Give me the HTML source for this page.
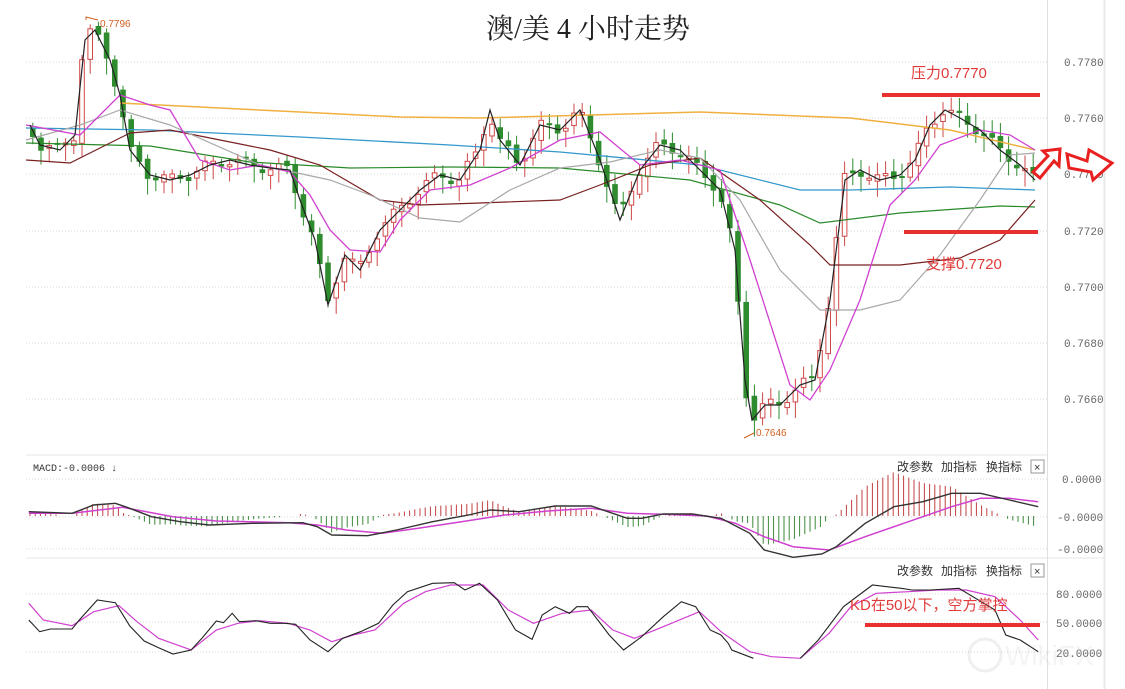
<!DOCTYPE html>
<html><head><meta charset="utf-8"><style>
html,body{margin:0;padding:0;background:#fff;width:1125px;height:689px;overflow:hidden}
svg{display:block}
.ax{font-family:"Liberation Mono",monospace;font-size:11px;fill:#666}
.hd{font-family:"Liberation Sans","Noto Sans CJK SC",sans-serif;font-size:12px;fill:#333}
.red{font-family:"Liberation Sans","Noto Sans CJK SC",sans-serif;font-size:15px;fill:#e03a3a}
</style></head><body>
<svg id="s" width="1125" height="689" xmlns="http://www.w3.org/2000/svg">
<rect width="1125" height="689" fill="#fff"/>
<g stroke="#d8d8d8" stroke-dasharray="1,2" stroke-width="1">
<line x1="26" y1="62" x2="1047" y2="62"/><line x1="26" y1="118" x2="1047" y2="118"/>
<line x1="26" y1="174" x2="1047" y2="174"/><line x1="26" y1="231" x2="1047" y2="231"/>
<line x1="26" y1="287" x2="1047" y2="287"/><line x1="26" y1="343" x2="1047" y2="343"/>
<line x1="26" y1="399" x2="1047" y2="399"/>
<line x1="26" y1="479" x2="1047" y2="479"/><line x1="26" y1="517" x2="1047" y2="517"/><line x1="26" y1="549" x2="1047" y2="549"/>
<line x1="26" y1="594" x2="1047" y2="594"/><line x1="26" y1="622" x2="1047" y2="622"/><line x1="26" y1="652" x2="1047" y2="652"/>
</g>
<line x1="26" y1="455" x2="1047" y2="455" stroke="#e4e4e4"/>
<line x1="26" y1="558" x2="1105" y2="558" stroke="#e4e4e4"/>
<line x1="1047.5" y1="0" x2="1047.5" y2="689" stroke="#e0e0e0"/>
<line x1="1104.5" y1="0" x2="1104.5" y2="689" stroke="#e8e8e8" stroke-width="2"/>
<g class="ax">
<text x="1064" y="66">0.7780</text><text x="1064" y="122">0.7760</text><text x="1064" y="178">0.7740</text>
<text x="1064" y="235">0.7720</text><text x="1064" y="291">0.7700</text><text x="1064" y="347">0.7680</text>
<text x="1064" y="403">0.7660</text>
<text x="1062" y="483">0.0000</text><text x="1057" y="521">-0.0000</text><text x="1057" y="553">-0.0000</text>
<text x="1056" y="598">80.0000</text><text x="1056" y="627">50.0000</text><text x="1056" y="657">20.0000</text>
</g>
<text x="588" y="38" text-anchor="middle" font-family="'Liberation Serif','Noto Serif CJK SC',serif" font-size="28" fill="#222">澳/美 4 小时走势</text>
<g id="cand"></g>
<g id="lines" fill="none"></g>
<text x="100" y="27" font-family="Liberation Sans,sans-serif" font-size="10" fill="#d06020">0.7796</text>
<path d="M86 20 L86 17 L98 20" stroke="#d06020" fill="none"/>
<text x="756" y="436" font-family="Liberation Sans,sans-serif" font-size="10" fill="#d06020">0.7646</text>
<path d="M744 438 L754 433" stroke="#d06020" fill="none"/>
<text x="911" y="78" class="red">压力0.7770</text>
<rect x="882" y="93" width="158" height="4" fill="#e83030"/>
<text x="926" y="269" class="red">支撑0.7720</text>
<rect x="904" y="230" width="134" height="4" fill="#e83030"/>
<text x="850" y="610" class="red">KD在50以下，空方掌控</text>
<rect x="865" y="623" width="175" height="4" fill="#e83030"/>
<polygon points="1033,172 1048,156 1043,151 1060,149 1059,166 1054,161 1040,178" fill="#fff" stroke="#e82020" stroke-width="3"/>
<polygon points="1067,154 1087,161 1089,150 1112,163 1093,180 1091,172 1069,168" fill="#fff" stroke="#e82020" stroke-width="3"/>
<text x="33" y="471" font-family="Liberation Mono,monospace" font-size="10" fill="#333">MACD:-0.0006 ↓</text>
<g class="hd">
<text x="897" y="471">改参数</text><text x="941" y="471">加指标</text><text x="986" y="471">换指标</text>
<rect x="1031" y="460" width="13" height="13" fill="#fff" stroke="#999"/><text x="1034" y="471" font-size="11">×</text>
<text x="897" y="575">改参数</text><text x="941" y="575">加指标</text><text x="986" y="575">换指标</text>
<rect x="1031" y="564" width="13" height="13" fill="#fff" stroke="#999"/><text x="1034" y="575" font-size="11">×</text>
</g>
<g opacity="0.15"><circle cx="985" cy="655" r="16" fill="none" stroke="#999" stroke-width="3"/>
<text x="1005" y="665" font-family="Liberation Sans,sans-serif" font-size="28" fill="#bbb">WikiFX</text></g>
</svg>
<script>
(function(){
var NS="http://www.w3.org/2000/svg",L=document.getElementById('lines'),C=document.getElementById('cand');
function pl(pts,col,w){var p=document.createElementNS(NS,'polyline');p.setAttribute('points',pts.map(function(a){return a[0].toFixed(1)+','+a[1].toFixed(1)}).join(' '));p.setAttribute('stroke',col);p.setAttribute('stroke-width',w||1);p.setAttribute('fill','none');L.appendChild(p);}
function el(t,a){var e=document.createElementNS(NS,t);for(var k in a)e.setAttribute(k,a[k]);C.appendChild(e);return e;}
var key=[[30,125],[40,145],[60,150],[75,135],[85,40],[95,30],[110,60],[120,95],[130,150],[150,175],[170,180],[190,175],[210,165],[230,160],[250,165],[270,168],[290,170],[300,200],[315,240],[328,305],[345,255],[360,270],[380,230],[400,210],[420,190],[440,175],[460,180],[480,150],[490,110],[500,140],[520,165],[540,125],[560,130],[580,110],[600,160],[620,220],[640,170],[660,145],[680,150],[700,170],[720,190],[735,250],[745,380],[752,420],[765,405],[780,405],[800,385],[815,380],[830,300],[845,180],[860,170],[880,180],[900,175],[915,160],[930,125],[945,110],[960,118],[980,130],[1000,150],[1020,165],[1035,180]];
function it(A,x){if(x<=A[0][0])return A[0][1];for(var i=1;i<A.length;i++)if(x<=A[i][0]){var a=A[i-1],b=A[i];return a[1]+(b[1]-a[1])*(x-a[0])/(b[0]-a[0]);}return A[A.length-1][1];}
var prev=it(key,30);
for(var x=30;x<=1036;x+=8.2){
 var c=it(key,x+4)+Math.sin(x*1.7)*6,o=prev+Math.sin(x*0.9)*3;
 var up=c<o,tp=Math.min(o,c),h=Math.max(Math.abs(o-c),2);
 var hi=tp-4-Math.abs(Math.sin(x*2.3))*10,lo=tp+h+4+Math.abs(Math.cos(x*1.3))*12;
 var col=up?'#d04848':'#2e8b2e';
 el('line',{x1:x+2.8,x2:x+2.8,y1:hi,y2:lo,stroke:col,'stroke-width':1});
 if(up)el('rect',{x:x+0.5,y:tp,width:4.6,height:h,fill:'#fff',stroke:col,'stroke-width':1});
 else el('rect',{x:x,y:tp,width:5.6,height:h,fill:col});
 prev=c;
}
pl([[120,103],[300,112],[400,117],[480,118],[700,112],[850,118],[950,130],[1035,150]],'#f0b040',1.5);
pl([[26,128],[150,130],[300,137],[450,145],[560,152],[700,165],[800,190],[850,190],[950,187],[1035,190]],'#3399cc',1.3);
pl([[26,143],[150,146],[250,162],[350,168],[450,167],[560,168],[690,180],[780,205],[820,223],[900,213],[1000,206],[1035,207]],'#2a8a2a',1.2);
pl([[26,160],[70,163],[100,148],[130,133],[170,130],[220,140],[270,150],[320,165],[380,200],[420,205],[480,203],[560,200],[600,185],[650,165],[700,158],[760,200],[810,245],[830,265],[860,265],[900,265],[960,258],[1000,240],[1035,200]],'#7a2020',1.2);
pl([[26,140],[80,125],[120,110],[170,125],[260,165],[330,180],[370,195],[420,218],[460,222],[510,190],[560,168],[610,162],[660,150],[700,158],[740,200],[780,270],[820,310],[860,310],[900,300],[940,255],[980,200],[1010,155],[1035,153]],'#a8a8a8',1.2);
pl([[26,125],[80,135],[120,95],[150,105],[170,110],[200,160],[230,170],[260,165],[290,172],[310,195],[330,230],[350,250],[380,252],[400,220],[430,190],[470,185],[510,168],[560,140],[600,132],[640,165],[680,160],[720,170],[750,260],[790,385],[810,400],[830,370],[860,300],[890,205],[915,180],[940,145],[980,130],[1010,135],[1035,150]],'#d040d0',1.3);
pl(key,'#222',1.2);
function cv(A){return A.map(function(p){return [p[0]/1.387,p[1]/3+450];});}
var M=cv([[40,185],[100,190],[130,165],[160,160],[180,175],[210,200],[250,215],[290,225],[350,220],[420,218],[440,230],[460,255],[510,257],[550,240],[600,215],[650,195],[680,180],[720,185],[770,168],[820,168],[870,205],[890,205],[920,192],[960,192],[1000,205],[1040,250],[1060,300],[1100,322],[1140,312],[1160,290],[1200,220],[1240,170],[1280,155],[1320,130],[1360,130],[1400,150],[1440,170]]);
var S=cv([[40,190],[100,190],[170,172],[240,200],[300,213],[400,218],[440,225],[480,240],[530,250],[580,235],[640,215],[700,195],[760,183],[820,175],[870,190],[920,193],[980,198],[1020,220],[1060,260],[1100,290],[1150,300],[1200,260],[1260,215],[1320,170],[1360,145],[1400,145],[1440,155]]);
for(var x=30;x<=1036;x+=5.2){var d=(it(S,x)-it(M,x))*2.2;if(Math.abs(d)<1)continue;el('line',{x1:x,x2:x,y1:516,y2:516-d,stroke:d>0?'#c04040':'#3a8a3a','stroke-width':1});}
pl(S,'#d040d0',1.5);pl(M,'#333',1.4);
pl(cv([[40,460],[60,510],[100,527],[130,485],[165,467],[190,515],[220,565],[265,600],[300,540],[330,520],[360,512],[400,520],[430,540],[460,575],[490,555],[520,540],[560,460],[590,425],[625,405],[670,405],[705,480],[740,520],[780,490],[820,480],[850,540],[880,565],[920,530],[970,485],[1000,545],[1040,605],[1070,620],[1110,625],[1150,550],[1180,470],[1215,430],[1260,425],[1300,420],[1340,420],[1380,440],[1415,510],[1440,570]]),'#d040d0',1.2);
pl(cv([[40,510],[55,545],[70,537],[100,537],[110,510],[135,450],[160,458],[180,528],[200,573],[220,593],[240,612],[265,600],[280,565],[300,513],[310,518],[322,490],[332,515],[355,512],[375,520],[395,520],[410,523],[430,570],[455,605],[475,565],[500,545],[525,520],[545,465],[565,425],[600,400],[630,398],[645,420],[665,400],[690,450],[715,540],[738,568],[752,495],[770,470],[790,490],[800,470],[815,470],[845,555],[865,600],[890,560],[920,500],[945,455],[965,470],[985,540],[1000,555],[1010,580],[1015,600],[1045,625]]),'#222',1.1);
pl(cv([[1110,625],[1135,570],[1170,470],[1210,405],[1250,415],[1265,420],[1290,420],[1330,415],[1380,480],[1395,555],[1415,570],[1440,605]]),'#222',1.1);
})();
</script>
</body></html>
